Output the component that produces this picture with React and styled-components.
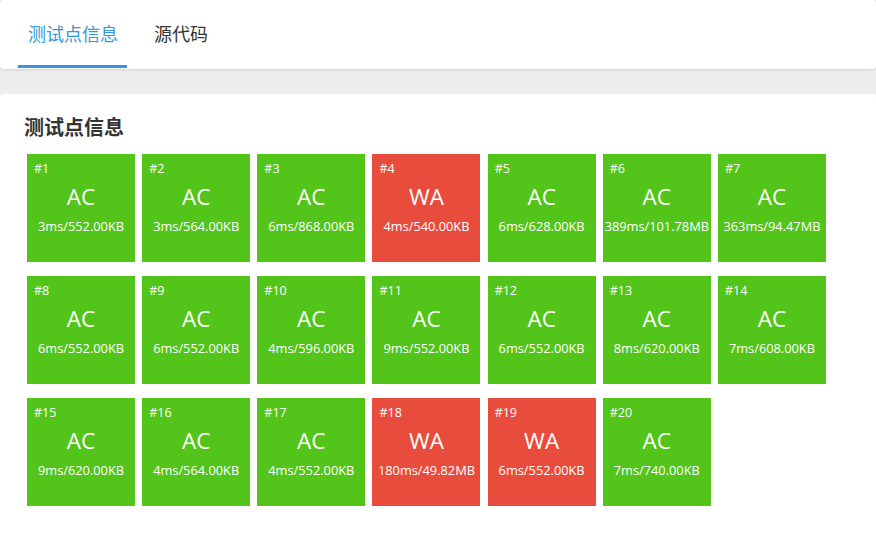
import React from 'react';
import styled, { createGlobalStyle } from 'styled-components';

const Global = createGlobalStyle`
  html, body {
    margin: 0;
    padding: 0;
    background: #eeeeee;
    font-family: "Open Sans", "Noto Sans CJK SC", sans-serif;
  }
`;

const Page = styled.div`
  display: flex;
  flex-direction: column;
  gap: 25px;
`;

const TabBar = styled.div`
  display: flex;
  gap: 17px;
  height: 69px;
  padding-left: 18px;
  background: #fff;
  border-radius: 4px;
  box-shadow: 0 1px 3px rgba(0, 0, 0, 0.12);
`;

const Tab = styled.div`
  display: flex;
  align-items: center;
  padding: 0 9px 0 10px;
  height: 65px;
  font-size: 18px;
  color: ${p => (p.active ? '#3498db' : '#333')};
  border-bottom: 3px solid ${p => (p.active ? '#3498db' : 'transparent')};
  font-family: "Noto Sans CJK SC", sans-serif;
`;

const Card = styled.div`
  background: #fff;
  border-radius: 4px;
  padding: 15px 24px 30px 27px;
  min-height: 420px;
`;

const Title = styled.h2`
  margin: 0 0 10px -3px;
  font-size: 20px;
  font-weight: 700;
  line-height: 35px;
  color: #333;
  font-family: "Noto Sans CJK SC", sans-serif;
`;

const Grid = styled.div`
  display: flex;
  flex-wrap: wrap;
  gap: 14px 7.17px;
`;

const Tile = styled.div`
  width: 108px;
  height: 108px;
  box-sizing: border-box;
  padding: 7px 7px;
  background: ${p => (p.ok ? '#52c41a' : '#e74c3c')};
  color: #fff;
  display: flex;
  flex-direction: column;
`;

const Num = styled.div`
  font-size: 12.5px;
  line-height: 16px;
`;

const Result = styled.div`
  text-align: center;
  font-size: 22.5px;
  line-height: 30px;
  margin-top: 5px;
`;

const Usage = styled.div`
  text-align: center;
  font-size: 12.8px;
  line-height: 16px;
  margin: 6px -7px 0;
  white-space: nowrap;
`;

const cases = [
  ['AC', '3ms/552.00KB'],
  ['AC', '3ms/564.00KB'],
  ['AC', '6ms/868.00KB'],
  ['WA', '4ms/540.00KB'],
  ['AC', '6ms/628.00KB'],
  ['AC', '389ms/101.78MB'],
  ['AC', '363ms/94.47MB'],
  ['AC', '6ms/552.00KB'],
  ['AC', '6ms/552.00KB'],
  ['AC', '4ms/596.00KB'],
  ['AC', '9ms/552.00KB'],
  ['AC', '6ms/552.00KB'],
  ['AC', '8ms/620.00KB'],
  ['AC', '7ms/608.00KB'],
  ['AC', '9ms/620.00KB'],
  ['AC', '4ms/564.00KB'],
  ['AC', '4ms/552.00KB'],
  ['WA', '180ms/49.82MB'],
  ['WA', '6ms/552.00KB'],
  ['AC', '7ms/740.00KB'],
];

export default function App() {
  return (
    <Page>
      <Global />
      <TabBar>
        <Tab active>测试点信息</Tab>
        <Tab>源代码</Tab>
      </TabBar>
      <Card>
        <Title>测试点信息</Title>
        <Grid>
          {cases.map(([res, usage], i) => (
            <Tile key={i} ok={res === 'AC'}>
              <Num>#{i + 1}</Num>
              <Result>{res}</Result>
              <Usage>{usage}</Usage>
            </Tile>
          ))}
        </Grid>
      </Card>
    </Page>
  );
}
